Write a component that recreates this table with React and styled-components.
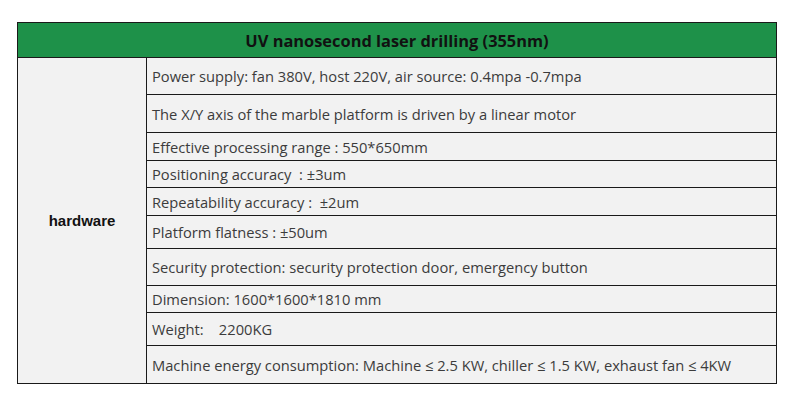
import React from "react";
import styled, { createGlobalStyle } from "styled-components";

const rows = [
  { h: 37, text: "Power supply: fan 380V, host 220V, air source: 0.4mpa -0.7mpa" },
  { h: 38, text: "The X/Y axis of the marble platform is driven by a linear motor" },
  { h: 28, text: "Effective processing range : 550*650mm" },
  { h: 27, text: "Positioning accuracy \u00a0: \u00b13um" },
  { h: 28, text: "Repeatability accuracy : \u00a0\u00b12um" },
  { h: 33, text: "Platform flatness : \u00b150um" },
  { h: 37, text: "Security protection: security protection door, emergency button" },
  { h: 27, text: "Dimension: 1600*1600*1810 mm" },
  { h: 33, text: "Weight: \u00a0\u00a0\u00a02200KG" },
  { h: 38, text: "Machine energy consumption: Machine \u2264 2.5 KW, chiller \u2264 1.5 KW, exhaust fan \u2264 4KW" },
];

function App() {
  return (
    <>
      <GlobalStyle />
      <Page>
        <Table>
          <colgroup>
            <col style={{ width: 129 }} />
            <col />
          </colgroup>
          <tbody>
            <tr>
              <HeadCell colSpan={2}>UV nanosecond laser drilling (355nm)</HeadCell>
            </tr>
            {rows.map((r, i) => (
              <Row key={i} $h={r.h}>
                {i === 0 && <LabelCell rowSpan={rows.length}>hardware</LabelCell>}
                <Cell>{r.text}</Cell>
              </Row>
            ))}
          </tbody>
        </Table>
      </Page>
    </>
  );
}

export default App;

const GlobalStyle = createGlobalStyle`
  body {
    margin: 0;
    background: #ffffff;
    font-family: "Open Sans", "Noto Sans", sans-serif;
  }
`;

const Page = styled.div`
  width: 800px;
  height: 406px;
  padding: 22px 0 0 17px;
  box-sizing: border-box;
`;

const Table = styled.table`
  width: 760px;
  border-collapse: collapse;
  table-layout: fixed;
  background: #f2f2f2;
  td {
    border: 1px solid #1a1a1a;
  }
`;

const HeadCell = styled.td`
  height: 34px;
  padding: 0;
  background: #1e9149;
  color: #111;
  font-family: "Open Sans", sans-serif;
  font-weight: 700;
  font-size: 16.4px;
  text-align: center;
`;

const Row = styled.tr`
  height: ${({ $h }) => $h}px;
`;

const LabelCell = styled.td`
  padding: 0;
  text-align: center;
  font-family: "Liberation Sans", Arial, sans-serif;
  font-weight: 700;
  font-size: 15px;
  color: #111;
`;

const Cell = styled.td`
  padding: 0 0 0 5px;
  font-size: 14.7px;
  color: #3c3c3c;
  white-space: nowrap;
  overflow: hidden;
`;
